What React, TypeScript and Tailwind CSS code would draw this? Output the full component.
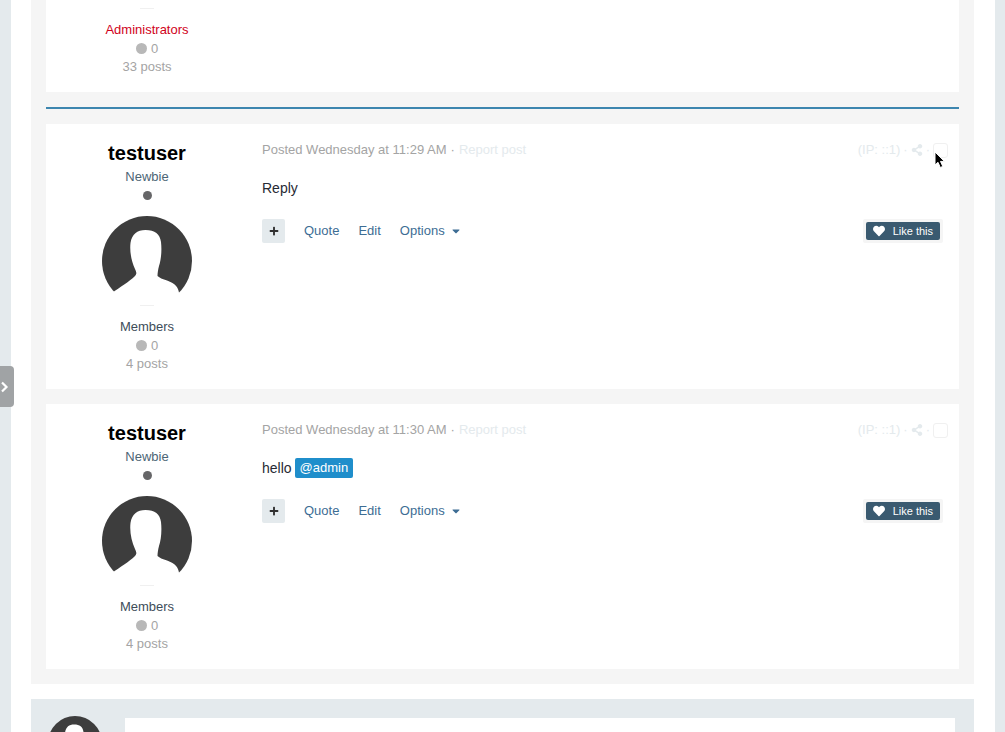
import React from 'react';
import { FaCaretDown, FaHeart, FaPlus, FaShareAlt } from 'react-icons/fa';

interface Post {
  id: number;
  time: string;
  body: React.ReactNode;
}

interface MemberStatsProps {
  group: string;
  posts: string;
  admin?: boolean;
}

const POSTS: Post[] = [
  { id: 1, time: 'Wednesday at 11:29 AM', body: 'Reply' },
  {
    id: 2,
    time: 'Wednesday at 11:30 AM',
    body: (
      <>
        hello
        <a href="#admin" className="ml-[3px] rounded-xs bg-[#1f8ecb] px-[5px] text-[13px] leading-5 text-white">
          @admin
        </a>
      </>
    ),
  },
];

function Avatar({ className }: { className: string }) {
  return (
    <svg viewBox="0 0 90 80" className={className} aria-hidden="true">
      <circle cx="45" cy="45" r="45" fill="#3d3d3d" />
      <path
        d="M43.500 14 C53 14 58 18 59 26 C60 35 59 44 57 50 C56 54 55.500 57 55.500 60 C60 64 67 64 72 68 C76 71 77 75 77.500 80 L77.500 92 L10 92 L10 77 C18 71 27 66 33 60 C35 58 34.500 56 33 53 C29.500 45 27.500 36 28.500 27 C30 18 35 14 43.500 14 Z"
        fill="#fff"
      />
    </svg>
  );
}

function MemberStats({ group, posts, admin = false }: MemberStatsProps) {
  return (
    <div className="flex flex-col items-center pb-4 text-[13px] leading-[19px] text-[#a4a4a4]">
      <hr className="mb-[11px] w-3.5 border-[#f0f0f0]" />
      <span className={admin ? 'text-[#d0021b]' : 'text-[#3d4d59]'}>{group}</span>
      <span className="flex items-center gap-1">
        <span className="size-[11px] rounded-full bg-[#b8b8b8]" />0
      </span>
      <span className="leading-[18px]">{posts}</span>
    </div>
  );
}

function PostCard({ post }: { post: Post }) {
  return (
    <article className="flex bg-white">
      {/* Author */}
      <aside className="flex w-[202px] shrink-0 flex-col items-center pt-[17px]">
        <h3 className="text-xl leading-6 font-bold text-black">
          <a href="#testuser">testuser</a>
        </h3>
        <p className="mt-0.5 text-[13px] leading-[19px] text-[#4d6575]">Newbie</p>
        <span className="mt-[5px] size-[9px] rounded-full bg-[#666668]" />
        <Avatar className="mt-4 mb-[9px] h-20 w-[90px]" />
        <MemberStats group="Members" posts="4 posts" />
      </aside>

      {/* Content */}
      <div className="min-w-0 flex-1 pt-4 pr-[11px] pl-3.5">
        <div className="flex items-center justify-between text-[13px] leading-5">
          <p className="flex gap-1 text-[#a4a4a4]">
            <span>Posted {post.time}</span>
            <span>·</span>
            <a href="#report" className="text-[#e4eaed]">Report post</a>
          </p>
          <div className="flex items-center gap-[3px] text-[#e4eaed]">
            <span>(IP: ::1)</span>
            <span>·</span>
            <a href="#share" aria-label="Share">
              <FaShareAlt className="size-3" />
            </a>
            <span>·</span>
            <input
              type="checkbox"
              aria-label="Select post"
              className="size-[15px] appearance-none rounded-[3px] border border-[#f0f0f0] bg-white"
            />
          </div>
        </div>

        <p className="mt-[18px] flex text-sm leading-5 text-[#272a34]">{post.body}</p>

        <div className="mt-[21px] flex items-center justify-between pr-[5px] text-[13px] text-[#3d6d94]">
          <div className="flex items-center gap-[19px]">
            <button
              type="button"
              aria-label="Multiquote"
              className="flex h-6 w-[23px] items-center justify-center rounded-xs bg-[#e4eaed] text-[#303030]"
            >
              <FaPlus className="size-[10px]" />
            </button>
            <a href="#quote">Quote</a>
            <a href="#edit">Edit</a>
            <button type="button" className="flex items-center gap-[5px]">
              Options <FaCaretDown className="size-3" />
            </button>
          </div>
          <div className="rounded-xs bg-[#f5f5f5] p-[3px]">
            <button
              type="button"
              className="flex h-[18px] items-center gap-2 rounded-xs bg-[#3a5a70] px-[7px] text-[11px] text-white"
            >
              <FaHeart className="size-3" /> Like this
            </button>
          </div>
        </div>
      </div>
    </article>
  );
}

export default function App() {
  return (
    <div className="h-screen overflow-hidden bg-[#e4eaed] pr-2.5 pl-[11px] font-['Liberation_Sans',Arial,sans-serif]">
      <main className="min-h-full bg-white pr-[21px] pl-5">
        <section className="bg-[#f5f5f5] px-[15px] pb-[15px]">
          <article className="bg-white pt-2">
            <div className="w-[202px]">
              <MemberStats group="Administrators" posts="33 posts" admin />
            </div>
          </article>
          <hr className="my-[15px] border-t-2 border-[#3d86af]" />
          <div className="flex flex-col gap-[15px]">
            {POSTS.map((post) => (
              <PostCard key={post.id} post={post} />
            ))}
          </div>
        </section>

        {/* Reply box */}
        <section className="mt-[15px] flex items-start gap-[23px] bg-[#e4eaed] py-[17px] pr-[19px] pl-[17px]">
          <Avatar className="h-12 w-[54px] shrink-0" />
          <textarea aria-label="Reply to this topic" className="mt-0.5 h-28 min-w-0 flex-1 resize-none bg-white" />
        </section>
      </main>

      {/* Sidebar toggle */}
      <button
        type="button"
        aria-label="Open sidebar"
        className="fixed top-1/2 left-0 flex h-[41px] w-3.5 items-center rounded-r-sm bg-[#a0a3a5] text-white"
      >
        <svg viewBox="0 0 10 12" className="h-3 w-2.5" fill="none" stroke="currentColor" strokeWidth="2.2">
          <path d="M2 1.500 L6.500 6 L2 10.500" />
        </svg>
      </button>

      {/* Pointer */}
      <svg viewBox="0 0 12 18" className="pointer-events-none absolute top-[151px] right-[59px] h-[18px] w-3">
        <path d="M1 1 L1 14 L4 11.300 L6.300 16.500 L8.800 15.400 L6.500 10.400 L10.500 10.400 Z" fill="#000" stroke="#fff" strokeWidth="1" />
      </svg>
    </div>
  );
}
